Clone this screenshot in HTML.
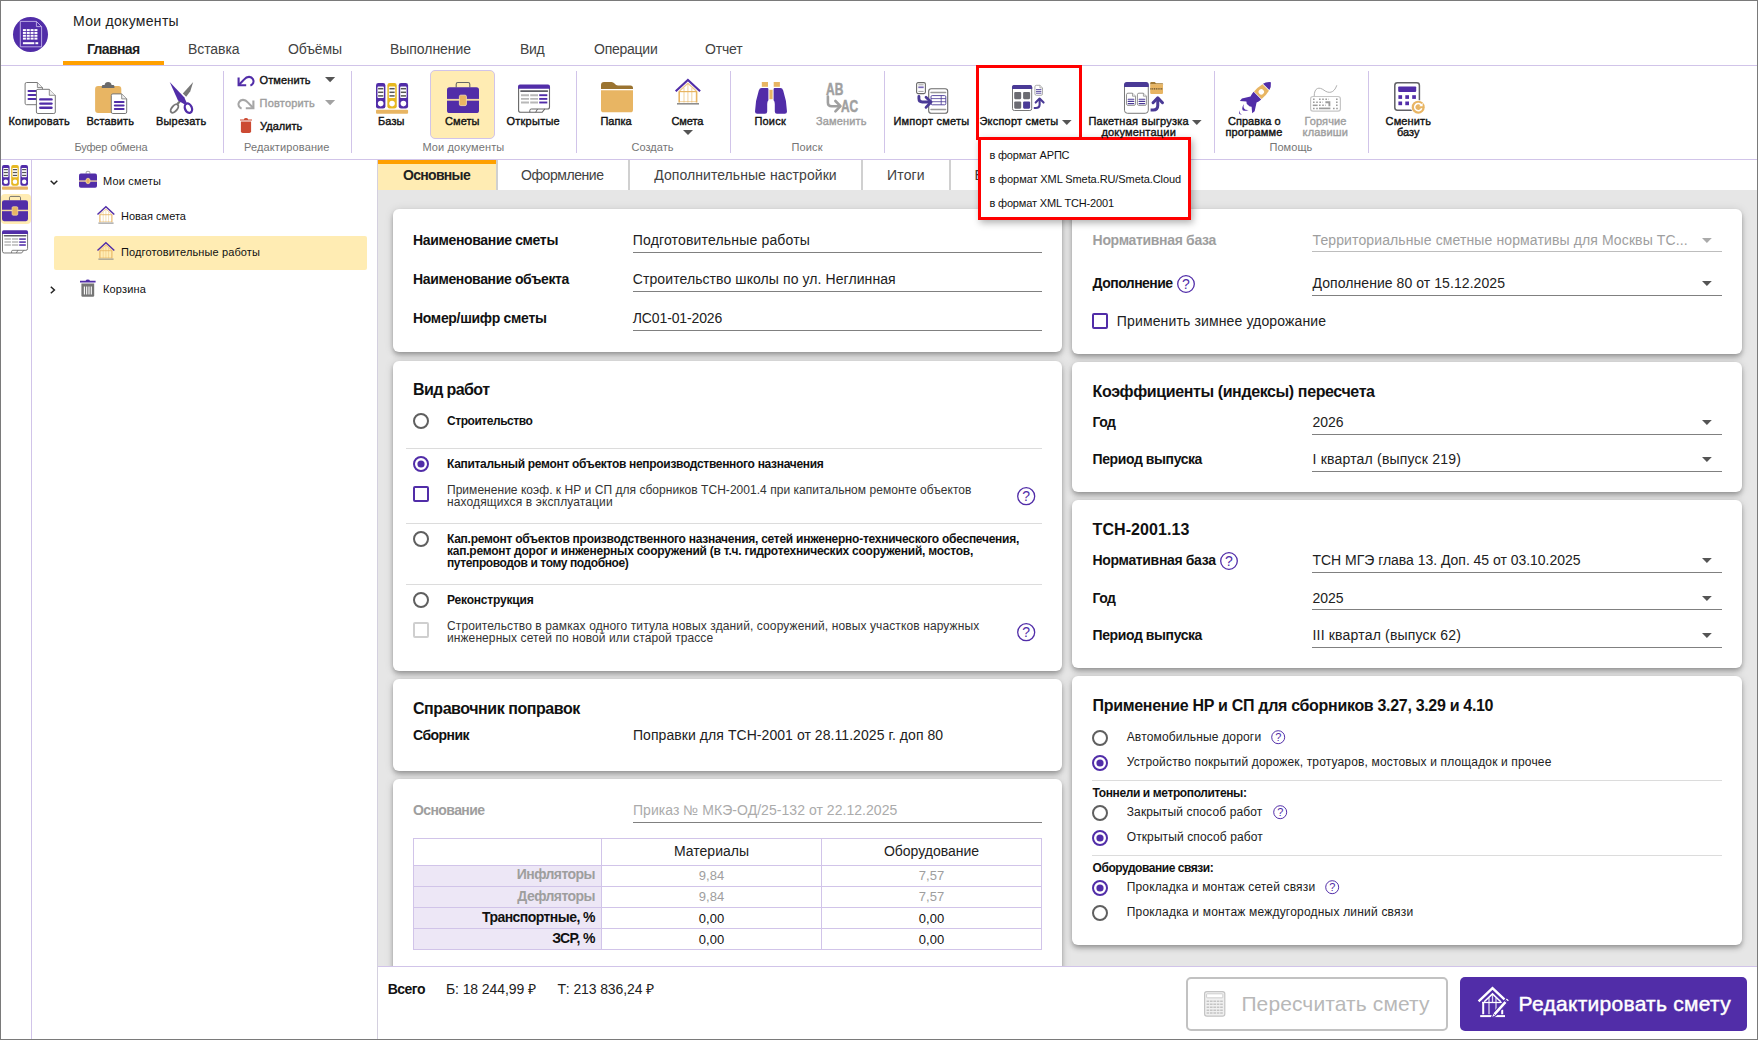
<!DOCTYPE html><html lang="ru"><head><meta charset="utf-8"><title>Мои документы</title><style>
html,body{margin:0;padding:0;}body{width:1758px;height:1040px;overflow:hidden;position:relative;background:#fff;font-family:"Liberation Sans", sans-serif;}
.t{position:absolute;white-space:nowrap;display:block;}svg{display:block;overflow:visible}
.card{position:absolute;background:#fff;border-radius:6px;box-shadow:0 2px 4px -1px rgba(0,0,0,.22),0 4px 5px rgba(0,0,0,.15),0 1px 10px rgba(0,0,0,.13);}
</style></head><body>
<div style="position:absolute;left:0px;top:65px;width:1758px;height:1px;background:#d1c4e9"></div>
<div style="position:absolute;left:0px;top:159px;width:1758px;height:1px;background:#d1c4e9"></div>
<svg style="position:absolute;left:13.4px;top:17px;" width="35" height="35" viewBox="0 0 35 35"><circle cx="17.5" cy="17.5" r="17.5" fill="#512da8"/><path d="M7.3 4.4H23.4L28.6 9.600V29.800H7.300z" fill="none" stroke="#c5b6ea" stroke-width="0.9"/><path d="M23.400 4.400V9.600H28.600" fill="none" stroke="#c5b6ea" stroke-width="0.9"/><g fill="#fff"><rect x="9.90" y="12.10" width="3" height="2"/><rect x="13.74" y="12.10" width="3" height="2"/><rect x="17.58" y="12.10" width="3" height="2"/><rect x="21.42" y="12.10" width="3" height="2"/><rect x="9.90" y="14.94" width="3" height="2"/><rect x="13.74" y="14.94" width="3" height="2"/><rect x="17.58" y="14.94" width="3" height="2"/><rect x="21.42" y="14.94" width="3" height="2"/><rect x="9.90" y="17.78" width="3" height="2"/><rect x="13.74" y="17.78" width="3" height="2"/><rect x="17.58" y="17.78" width="3" height="2"/><rect x="21.42" y="17.78" width="3" height="2"/><rect x="9.90" y="20.62" width="3" height="2"/><rect x="13.74" y="20.62" width="3" height="2"/><rect x="17.58" y="20.62" width="3" height="2"/><rect x="21.42" y="20.62" width="3" height="2"/><rect x="9.9" y="25.2" width="11.4" height="2"/><rect x="22.4" y="25.2" width="2.8" height="2"/></g></svg>
<div style="position:absolute;left:63px;top:61px;width:101px;height:4px;background:#ffa000"></div>
<div style="position:absolute;left:223px;top:71px;width:1px;height:82px;background:#d1c4e9"></div>
<div style="position:absolute;left:351px;top:71px;width:1px;height:82px;background:#d1c4e9"></div>
<div style="position:absolute;left:576px;top:71px;width:1px;height:82px;background:#d1c4e9"></div>
<div style="position:absolute;left:730px;top:71px;width:1px;height:82px;background:#d1c4e9"></div>
<div style="position:absolute;left:884px;top:71px;width:1px;height:82px;background:#d1c4e9"></div>
<div style="position:absolute;left:1214px;top:71px;width:1px;height:82px;background:#d1c4e9"></div>
<div style="position:absolute;left:1368px;top:71px;width:1px;height:82px;background:#d1c4e9"></div>
<div style="position:absolute;left:430px;top:70px;width:65px;height:68.5px;background:#ffecb3;border:1px solid #d1c4e9;border-radius:5px;box-sizing:border-box"></div>
<svg style="position:absolute;left:324.8px;top:76.8px;" width="10.2" height="5.3" viewBox="0 0 10.2 5.3"><path d="M0 0h10.2L5.1 5.3z" fill="#555"/></svg>
<svg style="position:absolute;left:324.8px;top:100px;" width="10.2" height="5.3" viewBox="0 0 10.2 5.3"><path d="M0 0h10.2L5.1 5.3z" fill="#a2a2a2"/></svg>
<svg style="position:absolute;left:682.6px;top:130px;" width="10" height="5" viewBox="0 0 10 5"><path d="M0 0h10L5.0 5z" fill="#555"/></svg>
<svg style="position:absolute;left:1062.4px;top:119.5px;" width="9.6" height="5" viewBox="0 0 9.6 5"><path d="M0 0h9.6L4.8 5z" fill="#555"/></svg>
<svg style="position:absolute;left:1192px;top:119.5px;" width="9.6" height="5" viewBox="0 0 9.6 5"><path d="M0 0h9.6L4.8 5z" fill="#555"/></svg>
<div style="position:absolute;left:31px;top:160px;width:1px;height:880px;background:#d1c4e9"></div>
<div style="position:absolute;left:377px;top:160px;width:1px;height:880px;background:#d4d0df"></div>
<div style="position:absolute;left:1px;top:194px;width:30px;height:30px;background:#ffecb3;border-radius:4px"></div>
<div style="position:absolute;left:54px;top:236px;width:313px;height:34px;background:#ffecb3;border-radius:2px"></div>
<svg style="position:absolute;left:49.6px;top:180.4px;" width="8" height="5" viewBox="0 0 8 5"><path d="M0.7 0.7L4 4l3.3-3.3" fill="none" stroke="#222" stroke-width="1.5"/></svg>
<svg style="position:absolute;left:50.4px;top:286px;" width="5.6" height="8" viewBox="0 0 5.6 8"><path d="M0.8 0.7L4.4 4 0.8 7.3" fill="none" stroke="#222" stroke-width="1.5"/></svg>
<div style="position:absolute;left:378px;top:190px;width:1380px;height:776px;background:#e6e6e6"></div>
<div style="position:absolute;left:378px;top:160px;width:1380px;height:30px;background:#fff"></div>
<div style="position:absolute;left:378px;top:160px;width:118px;height:30px;background:#ffecb3"></div>
<div style="position:absolute;left:378px;top:160px;width:118px;height:4px;background:#ffa000"></div>
<div style="position:absolute;left:496px;top:160px;width:2px;height:30px;background:#d0d0d0"></div>
<div style="position:absolute;left:628px;top:160px;width:2px;height:30px;background:#d0d0d0"></div>
<div style="position:absolute;left:861px;top:160px;width:2px;height:30px;background:#d0d0d0"></div>
<div style="position:absolute;left:949px;top:160px;width:2px;height:30px;background:#d0d0d0"></div>
<div style="position:absolute;left:974.5px;top:166px;width:3.4px;height:20px;overflow:hidden;font-size:14px;line-height:18px;color:#424242">Е</div>
<div class="card" style="left:393px;top:209px;width:669px;height:143px;"></div>
<div class="card" style="left:393px;top:360.5px;width:669px;height:310.5px;"></div>
<div class="card" style="left:393px;top:679px;width:669px;height:92px;"></div>
<div class="card" style="left:393px;top:779px;width:669px;height:200px;"></div>
<div class="card" style="left:1072px;top:209px;width:670px;height:145px;"></div>
<div class="card" style="left:1072px;top:362px;width:670px;height:130px;"></div>
<div class="card" style="left:1072px;top:500px;width:670px;height:168px;"></div>
<div class="card" style="left:1072px;top:676px;width:670px;height:269px;"></div>
<div style="position:absolute;left:633px;top:252px;width:409px;height:1px;background:#808080"></div>
<div style="position:absolute;left:633px;top:291px;width:409px;height:1px;background:#808080"></div>
<div style="position:absolute;left:633px;top:330px;width:409px;height:1px;background:#808080"></div>
<svg style="position:absolute;left:413px;top:413px;" width="16" height="16" viewBox="0 0 16 16"><circle cx="8" cy="8" r="7" fill="#fff" stroke="#5f5f5f" stroke-width="2"/></svg>
<div style="position:absolute;left:406px;top:448px;width:636px;height:1px;background:#dcdcdc"></div>
<svg style="position:absolute;left:413px;top:456px;" width="16" height="16" viewBox="0 0 16 16"><circle cx="8" cy="8" r="7" fill="#fff" stroke="#512da8" stroke-width="2"/><circle cx="8" cy="8" r="3.6" fill="#512da8"/></svg>
<div style="position:absolute;left:413px;top:486px;width:16px;height:16px;border:2px solid #512da8;border-radius:2px;box-sizing:border-box;background:#fff"></div>
<svg style="position:absolute;left:1016.8px;top:486.8px;" width="18.4" height="18.4" viewBox="0 0 18.4 18.4"><circle cx="9.2" cy="9.2" r="8.5" fill="#fff" stroke="#512da8" stroke-width="1.3"/><text x="9.2" y="14.239999999999998" font-size="14" text-anchor="middle" fill="#512da8" font-family="Liberation Sans, sans-serif">?</text></svg>
<div style="position:absolute;left:406px;top:523px;width:636px;height:1px;background:#dcdcdc"></div>
<svg style="position:absolute;left:413px;top:531px;" width="16" height="16" viewBox="0 0 16 16"><circle cx="8" cy="8" r="7" fill="#fff" stroke="#5f5f5f" stroke-width="2"/></svg>
<div style="position:absolute;left:406px;top:584px;width:636px;height:1px;background:#dcdcdc"></div>
<svg style="position:absolute;left:413px;top:592px;" width="16" height="16" viewBox="0 0 16 16"><circle cx="8" cy="8" r="7" fill="#fff" stroke="#5f5f5f" stroke-width="2"/></svg>
<div style="position:absolute;left:413px;top:622px;width:16px;height:16px;border:2px solid #cfcfcf;border-radius:2px;box-sizing:border-box;background:#fff"></div>
<svg style="position:absolute;left:1016.8px;top:622.8px;" width="18.4" height="18.4" viewBox="0 0 18.4 18.4"><circle cx="9.2" cy="9.2" r="8.5" fill="#fff" stroke="#512da8" stroke-width="1.3"/><text x="9.2" y="14.239999999999998" font-size="14" text-anchor="middle" fill="#512da8" font-family="Liberation Sans, sans-serif">?</text></svg>
<div style="position:absolute;left:633px;top:822px;width:409px;height:1px;background:#808080"></div>
<div style="position:absolute;left:413px;top:838px;width:629px;height:112px;border:1px solid #d1c4e9;box-sizing:border-box;background:#fff"></div>
<div style="position:absolute;left:414px;top:865px;width:187px;height:84px;background:#ede7f6"></div>
<div style="position:absolute;left:413px;top:865px;width:629px;height:1px;background:#d1c4e9"></div>
<div style="position:absolute;left:413px;top:886px;width:629px;height:1px;background:#d1c4e9"></div>
<div style="position:absolute;left:413px;top:907px;width:629px;height:1px;background:#d1c4e9"></div>
<div style="position:absolute;left:413px;top:928px;width:629px;height:1px;background:#d1c4e9"></div>
<div style="position:absolute;left:601px;top:838px;width:1px;height:112px;background:#d1c4e9"></div>
<div style="position:absolute;left:821px;top:838px;width:1px;height:112px;background:#d1c4e9"></div>
<div style="position:absolute;left:1312px;top:251px;width:410px;height:1px;background:#bdbdbd"></div>
<svg style="position:absolute;left:1176.6px;top:275.0px;" width="18" height="18" viewBox="0 0 18 18"><circle cx="9.0" cy="9.0" r="8.3" fill="#fff" stroke="#512da8" stroke-width="1.3"/><text x="9.0" y="14.04" font-size="14" text-anchor="middle" fill="#512da8" font-family="Liberation Sans, sans-serif">?</text></svg>
<div style="position:absolute;left:1312px;top:295px;width:410px;height:1px;background:#808080"></div>
<div style="position:absolute;left:1092px;top:313px;width:16px;height:16px;border:2px solid #512da8;border-radius:2px;box-sizing:border-box;background:#fff"></div>
<svg style="position:absolute;left:1702.2px;top:238px;" width="9.8" height="5" viewBox="0 0 10 5"><path d="M0 0h10L5 5z" fill="#aaa"/></svg>
<svg style="position:absolute;left:1702.2px;top:281px;" width="9.8" height="5" viewBox="0 0 10 5"><path d="M0 0h10L5 5z" fill="#555"/></svg>
<div style="position:absolute;left:1312px;top:434px;width:410px;height:1px;background:#808080"></div>
<svg style="position:absolute;left:1702.2px;top:420px;" width="9.8" height="5" viewBox="0 0 10 5"><path d="M0 0h10L5 5z" fill="#555"/></svg>
<div style="position:absolute;left:1312px;top:471px;width:410px;height:1px;background:#808080"></div>
<svg style="position:absolute;left:1702.2px;top:457px;" width="9.8" height="5" viewBox="0 0 10 5"><path d="M0 0h10L5 5z" fill="#555"/></svg>
<svg style="position:absolute;left:1220.2px;top:552.0px;" width="18" height="18" viewBox="0 0 18 18"><circle cx="9.0" cy="9.0" r="8.3" fill="#fff" stroke="#512da8" stroke-width="1.3"/><text x="9.0" y="14.04" font-size="14" text-anchor="middle" fill="#512da8" font-family="Liberation Sans, sans-serif">?</text></svg>
<div style="position:absolute;left:1312px;top:572px;width:410px;height:1px;background:#808080"></div>
<svg style="position:absolute;left:1702.2px;top:558px;" width="9.8" height="5" viewBox="0 0 10 5"><path d="M0 0h10L5 5z" fill="#555"/></svg>
<div style="position:absolute;left:1312px;top:609px;width:410px;height:1px;background:#808080"></div>
<svg style="position:absolute;left:1702.2px;top:596px;" width="9.8" height="5" viewBox="0 0 10 5"><path d="M0 0h10L5 5z" fill="#555"/></svg>
<div style="position:absolute;left:1312px;top:647px;width:410px;height:1px;background:#808080"></div>
<svg style="position:absolute;left:1702.2px;top:633px;" width="9.8" height="5" viewBox="0 0 10 5"><path d="M0 0h10L5 5z" fill="#555"/></svg>
<svg style="position:absolute;left:1092px;top:729.5px;" width="16" height="16" viewBox="0 0 16 16"><circle cx="8" cy="8" r="7" fill="#fff" stroke="#5f5f5f" stroke-width="2"/></svg>
<svg style="position:absolute;left:1270.8px;top:729.8px;" width="14.4" height="14.4" viewBox="0 0 14.4 14.4"><circle cx="7.2" cy="7.2" r="6.5" fill="#fff" stroke="#512da8" stroke-width="1"/><text x="7.2" y="11.16" font-size="11" text-anchor="middle" fill="#512da8" font-family="Liberation Sans, sans-serif">?</text></svg>
<svg style="position:absolute;left:1092px;top:754.5px;" width="16" height="16" viewBox="0 0 16 16"><circle cx="8" cy="8" r="7" fill="#fff" stroke="#512da8" stroke-width="2"/><circle cx="8" cy="8" r="3.6" fill="#512da8"/></svg>
<div style="position:absolute;left:1092px;top:780px;width:630px;height:1px;background:#dcdcdc"></div>
<svg style="position:absolute;left:1092px;top:804.5px;" width="16" height="16" viewBox="0 0 16 16"><circle cx="8" cy="8" r="7" fill="#fff" stroke="#5f5f5f" stroke-width="2"/></svg>
<svg style="position:absolute;left:1272.8px;top:804.8px;" width="14.4" height="14.4" viewBox="0 0 14.4 14.4"><circle cx="7.2" cy="7.2" r="6.5" fill="#fff" stroke="#512da8" stroke-width="1"/><text x="7.2" y="11.16" font-size="11" text-anchor="middle" fill="#512da8" font-family="Liberation Sans, sans-serif">?</text></svg>
<svg style="position:absolute;left:1092px;top:829.5px;" width="16" height="16" viewBox="0 0 16 16"><circle cx="8" cy="8" r="7" fill="#fff" stroke="#512da8" stroke-width="2"/><circle cx="8" cy="8" r="3.6" fill="#512da8"/></svg>
<div style="position:absolute;left:1092px;top:855px;width:630px;height:1px;background:#dcdcdc"></div>
<svg style="position:absolute;left:1092px;top:879.5px;" width="16" height="16" viewBox="0 0 16 16"><circle cx="8" cy="8" r="7" fill="#fff" stroke="#512da8" stroke-width="2"/><circle cx="8" cy="8" r="3.6" fill="#512da8"/></svg>
<svg style="position:absolute;left:1324.8px;top:879.8px;" width="14.4" height="14.4" viewBox="0 0 14.4 14.4"><circle cx="7.2" cy="7.2" r="6.5" fill="#fff" stroke="#512da8" stroke-width="1"/><text x="7.2" y="11.16" font-size="11" text-anchor="middle" fill="#512da8" font-family="Liberation Sans, sans-serif">?</text></svg>
<svg style="position:absolute;left:1092px;top:904.5px;" width="16" height="16" viewBox="0 0 16 16"><circle cx="8" cy="8" r="7" fill="#fff" stroke="#5f5f5f" stroke-width="2"/></svg>
<div style="position:absolute;left:378px;top:966px;width:1380px;height:74px;background:#fff;border-top:1px solid #d1c4e9;box-sizing:border-box"></div>
<div style="position:absolute;left:1186px;top:977px;width:262px;height:54px;border:2px solid #c2c2c2;border-radius:5px;box-sizing:border-box;background:#fff"></div>
<div style="position:absolute;left:1460px;top:977px;width:287px;height:54px;background:#512da8;border-radius:5px"></div>
<svg style="position:absolute;left:24px;top:81.6px;" width="32" height="32" viewBox="0 0 32 32"><path d="M2.6 0.5H13.400000000000002L18.400000000000002 5.5V21.2a1.5 1.5 0 0 1 -1.5 1.5H2.6a1.5 1.5 0 0 1 -1.5 -1.5V2.0a1.5 1.5 0 0 1 1.5 -1.5z" fill="#fff" stroke="#777" stroke-width="1"/><path d="M13.400000000000002 0.5V5.5H18.400000000000002" fill="#eee" stroke="#777" stroke-width="0.8"/><path d="M4.5 9H13" stroke="#512da8" stroke-width="2" stroke-linecap="round"/><path d="M4.5 13H13" stroke="#512da8" stroke-width="2" stroke-linecap="round"/><path d="M4.5 17H13" stroke="#512da8" stroke-width="2" stroke-linecap="round"/><path d="M13.9 7.3H25.299999999999997L31.299999999999997 13.3V30.0a1.5 1.5 0 0 1 -1.5 1.5H13.9a1.5 1.5 0 0 1 -1.5 -1.5V8.8a1.5 1.5 0 0 1 1.5 -1.5z" fill="#fff" stroke="#777" stroke-width="1"/><path d="M25.299999999999997 7.3V13.3H31.299999999999997" fill="#eee" stroke="#777" stroke-width="0.8"/><path d="M16.3 17.4H27.5" stroke="#512da8" stroke-width="2.4" stroke-linecap="round"/><path d="M16.3 21.6H27.5" stroke="#512da8" stroke-width="2.4" stroke-linecap="round"/><path d="M16.3 25.8H27.5" stroke="#512da8" stroke-width="2.4" stroke-linecap="round"/></svg>
<svg style="position:absolute;left:94px;top:81.6px;" width="34" height="32" viewBox="0 0 34 32"><rect x="1.1" y="4" width="26.2" height="27" rx="3" fill="#e8b563"/><path d="M7.800 6V4.400q0-1.300 1.300-1.300h1.500q0.400-3.100 3.500-3.100t3.500 3.100h1.500q1.300 0 1.300 1.300V6z" fill="#6a6a6a"/><path d="M18.8 11.9H27.700000000000003L32.7 16.9V30.0a1.5 1.5 0 0 1 -1.5 1.5H18.8a1.5 1.5 0 0 1 -1.5 -1.5V13.4a1.5 1.5 0 0 1 1.5 -1.5z" fill="#fff" stroke="#777" stroke-width="1"/><path d="M27.700000000000003 11.9V16.9H32.7" fill="#eee" stroke="#777" stroke-width="0.8"/><path d="M20.8 20H29.6" stroke="#512da8" stroke-width="2" stroke-linecap="round"/><path d="M20.8 23.5H29.6" stroke="#512da8" stroke-width="2" stroke-linecap="round"/><path d="M20.8 27H29.6" stroke="#512da8" stroke-width="2" stroke-linecap="round"/></svg>
<svg style="position:absolute;left:168px;top:81.6px;" width="26" height="32" viewBox="0 0 26 32"><path d="M25.2 0L14.800 11.400 18.200 14.800 22.300 9.200z" fill="#777"/><path d="M15 16L9.400 22" stroke="#777" stroke-width="2.200"/><ellipse cx="6.500" cy="26.500" rx="2.700" ry="5" transform="rotate(40 6.500 26.500)" fill="#fff" stroke="#777" stroke-width="1.900"/><path d="M1.700 0L10 18.600 16.800 22.400 18.600 20.600 16.200 15.200z" fill="#512da8"/><ellipse cx="20.400" cy="26.200" rx="3.400" ry="4.900" transform="rotate(-22 20.400 26.200)" fill="#fff" stroke="#512da8" stroke-width="2.300"/></svg>
<svg style="position:absolute;left:237px;top:75px;" width="18" height="12" viewBox="0 0 18 12"><g fill="none" stroke="#512da8" stroke-width="2.1"><path d="M1.6 2.6V10.2H9.2"/><path d="M2 9.8L7.2 4.4C10 1.2 14.2 1 16 4.2 17.6 7 15.8 9.6 13.4 10.6"/></g></svg>
<svg style="position:absolute;left:237px;top:98.2px;" width="18" height="12" viewBox="0 0 18 12"><g transform="translate(18 0) scale(-1 1)" fill="none" stroke="#a6a6a6" stroke-width="2.1"><path d="M1.6 2.6V10.2H9.2"/><path d="M2 9.8L7.2 4.4C10 1.2 14.2 1 16 4.2 17.6 7 15.8 9.6 13.4 10.6"/></g></svg>
<svg style="position:absolute;left:240px;top:118px;" width="12" height="15.2" viewBox="0 0 12 15.2"><path d="M0 2.6V1.4H3.8Q4.2 0 6 0t2.2 1.4H12V2.6z" fill="#cc4a33"/><path d="M0.9 3.6H11.1V13.3a1.8 1.8 0 0 1 -1.8 1.8H2.7a1.8 1.8 0 0 1 -1.8 -1.8z" fill="#cc4a33"/></svg>
<svg style="position:absolute;left:376px;top:83.1px;" width="32.1" height="30.7" viewBox="0 0 32.1 30.7"><rect x="0.0" y="0" width="9.4" height="25.6" rx="2.4" fill="#512da8"/><rect x="1.5" y="3.6" width="6.4" height="11.4" rx="0.8" fill="#fff"/><path d="M2.1 5.7H7.3" stroke="#555" stroke-width="1.5"/><path d="M2.1 9.3H7.3" stroke="#555" stroke-width="1.5"/><path d="M2.1 12.9H7.3" stroke="#555" stroke-width="1.5"/><circle cx="4.7" cy="20.6" r="2.8" fill="#fff"/><rect x="11.35" y="0" width="9.4" height="25.6" rx="2.4" fill="#e6b820"/><rect x="12.85" y="3.6" width="6.4" height="11.4" rx="0.8" fill="#fff"/><path d="M13.45 5.7H18.65" stroke="#555" stroke-width="1.5"/><path d="M13.45 9.3H18.65" stroke="#555" stroke-width="1.5"/><path d="M13.45 12.9H18.65" stroke="#555" stroke-width="1.5"/><circle cx="16.05" cy="20.6" r="2.8" fill="#fff"/><rect x="22.7" y="0" width="9.4" height="25.6" rx="2.4" fill="#512da8"/><rect x="24.2" y="3.6" width="6.4" height="11.4" rx="0.8" fill="#fff"/><path d="M24.8 5.7H30.0" stroke="#555" stroke-width="1.5"/><path d="M24.8 9.3H30.0" stroke="#555" stroke-width="1.5"/><path d="M24.8 12.9H30.0" stroke="#555" stroke-width="1.5"/><circle cx="27.4" cy="20.6" r="2.8" fill="#fff"/><rect x="0" y="26.7" width="32.1" height="4" rx="1" fill="#e8b563"/></svg>
<svg style="position:absolute;left:447px;top:82px;" width="32.0" height="31.0" viewBox="0 0 32 31"><path d="M9.2 5.4V2.2q0-1.7 1.7-1.7h10.2q1.7 0 1.7 1.7V5.4" fill="none" stroke="#666" stroke-width="1.1"/><rect x="0" y="5.2" width="32" height="25.8" rx="2.6" fill="#512da8"/><rect x="0" y="16.9" width="32" height="1.8" fill="#f4d9a2"/><rect x="12.4" y="13.2" width="7" height="10.4" rx="1.3" fill="#e8b563" stroke="#f4d9a2" stroke-width="0.9"/></svg>
<svg style="position:absolute;left:518px;top:84px;" width="32.0" height="29.0" viewBox="0 0 32 29"><path d="M0.6 3V26.200Q0.600 28.300 2.700 28.300H24.200L26.800 25H29.400Q31.500 25 31.500 22.900V3z" fill="#fff" stroke="#666" stroke-width="1.100"/><path d="M11.800 28.300V26.500Q11.800 25 13.300 25H26.800M19.500 25L17.700 28.300" fill="none" stroke="#666" stroke-width="1"/><path d="M0 4.800V2.400q0-2 2-2H30q2 0 2 2V4.800z" fill="#512da8"/><path d="M3 7.100H29.300" stroke="#5f5f66" stroke-width="1.700" stroke-linecap="round"/><path d="M3 11.2H11M12.200 11.2H20" stroke="#b8b8b8" stroke-width="1.900"/><path d="M21.200 11.2H29.300" stroke="#512da8" stroke-width="1.900"/><path d="M3 14.9H11M12.200 14.9H20" stroke="#b8b8b8" stroke-width="1.900"/><path d="M21.200 14.9H29.300" stroke="#512da8" stroke-width="1.900"/><path d="M3 18.5H11M12.200 18.5H20" stroke="#b8b8b8" stroke-width="1.900"/><path d="M21.200 18.5H29.300" stroke="#512da8" stroke-width="1.900"/></svg>
<svg style="position:absolute;left:601px;top:82px;" width="32" height="30.3" viewBox="0 0 32 30.3"><path d="M0 6.9V3q0-3 3-3H10.5q1.8 0 3 1.6 1.4 2 3.5 2H29.5q2.5 0 2.5 2.5V6.9z" fill="#9a7330"/><path d="M0 8.3H32V27.7q0 2.6-2.6 2.6H2.6Q0 30.300 0 27.700z" fill="#e8b563"/></svg>
<svg style="position:absolute;left:675px;top:78.6px;" width="26.0" height="26.0" viewBox="0 0 26 26"><g fill="none" stroke="#e8b563"><path d="M4.2 12.4V23.4M21.6 12.4V23.4" stroke-width="1.6"/><path d="M3.8 12.6H22" stroke-width="1.2"/><path d="M4.5 12L12.9 4.4 21.3 12" stroke-width="1.2" opacity=".75"/><path d="M9 9V23.4M12.9 4.6V23.4M16.8 9V23.4" stroke-width="1.1" opacity=".55"/><path d="M4.2 22.6H21.6" stroke-width="1" opacity=".6"/></g><path d="M0.7 12.3L12.9 1 25.1 12.3" fill="none" stroke="#512da8" stroke-width="2.1"/><path d="M2 24.8H24" stroke="#888" stroke-width="1.5"/></svg>
<svg style="position:absolute;left:755px;top:82px;" width="32" height="31.8" viewBox="0 0 32 31.8"><rect x="6.8" y="0" width="6.2" height="4.8" fill="#e8b563"/><rect x="18.7" y="0" width="6.2" height="4.8" fill="#e8b563"/><rect x="14.4" y="7.8" width="3.2" height="9.4" fill="#e8b563"/><path d="M6.6 6H12.4Q13.4 6 13.4 7.2V18.2Q12.2 19.4 12.2 22V29.6Q12.2 31.8 10 31.8H2.2Q0 31.8 0 29.6 0.200 19 3.800 8.400 4.600 6 6.600 6z" fill="#512da8"/><path d="M25.4 6H19.600Q18.600 6 18.600 7.2V18.2Q19.800 19.400 19.800 22V29.6Q19.800 31.800 22 31.800H29.800Q32 31.800 32 29.600 31.800 19 28.200 8.400 27.400 6 25.400 6z" fill="#512da8"/></svg>
<svg style="position:absolute;left:826px;top:82.9px;" width="33" height="30" viewBox="0 0 33 30"><text x="0.1" y="12.1" font-size="16.9" font-weight="700" fill="#a0a0a0" stroke="#a0a0a0" stroke-width="0.5" textLength="17.3" lengthAdjust="spacingAndGlyphs" font-family="Liberation Sans, sans-serif">AB</text><text x="15" y="29" font-size="16.9" font-weight="700" fill="#a0a0a0" stroke="#a0a0a0" stroke-width="0.5" textLength="17.2" lengthAdjust="spacingAndGlyphs" font-family="Liberation Sans, sans-serif">AC</text><path d="M1.9 13.5V19.400Q1.900 23.200 5.700 23.200H13.400" fill="none" stroke="#a0a0a0" stroke-width="2.600" stroke-linecap="round"/><path d="M9.400 18L14.500 23.200 9.400 28.400" fill="none" stroke="#a0a0a0" stroke-width="2.600" stroke-linecap="round" stroke-linejoin="round"/></svg>
<svg style="position:absolute;left:915.5px;top:81.8px;" width="32.5" height="32" viewBox="0 0 32.5 32"><rect x="0.600" y="0.600" width="8.800" height="11" rx="1.500" fill="#fff" stroke="#6a6a6a" stroke-width="1.100"/><path d="M2.400 2.800H7.600M2.400 9.400H7.600" stroke="#999" stroke-width="0.900"/><path d="M2.300 5.300H7.700" stroke="#7a6bb8" stroke-width="1.700"/><rect x="12.700" y="6.700" width="19" height="24.600" rx="2.600" fill="#fff" stroke="#6a6a6a" stroke-width="1.100"/><path d="M15 10.600H29.600M15 27.400H29.600" stroke="#999" stroke-width="1.500" stroke-linecap="round"/><rect x="15" y="13.600" width="14.800" height="9.200" rx="1.200" fill="#fff" stroke="#4a3a96" stroke-width="0.900"/><path d="M15 16.600H29.800M15 19.700H29.800M25.200 13.600V22.800" stroke="#4a3a96" stroke-width="0.800"/><path d="M2.900 14.400V16.600Q2.900 20 6.300 20H14" fill="none" stroke="#4a3a96" stroke-width="2.900" stroke-linecap="round"/><path d="M10 15.200L15.100 20 10 25.400" fill="none" stroke="#4a3a96" stroke-width="2.700" stroke-linejoin="round" stroke-linecap="round"/></svg>
<svg style="position:absolute;left:1011.8px;top:84.6px;" width="32.5" height="26" viewBox="0 0 32.5 26"><rect x="0.5" y="0.5" width="19.2" height="25" rx="1.8" fill="#fff" stroke="#777"/><path d="M0 4V2q0-2 2-2H18.200q2 0 2 2V4z" fill="#4a3a96"/><rect x="2.2" y="7" width="7" height="7.2" rx="1.1" fill="#6b6b72"/><rect x="11.1" y="7" width="7" height="7.2" rx="1.1" fill="#6b6b72"/><rect x="2.2" y="16.5" width="7" height="7.2" rx="1.1" fill="#6b6b72"/><rect x="11.1" y="16.5" width="7" height="7.2" rx="1.1" fill="#4a3a96"/><path d="M24.4 0.3H27.9L30.5 2.9V8.8a1.5 1.5 0 0 1 -1.5 1.5H24.4a1.5 1.5 0 0 1 -1.5 -1.5V1.8a1.5 1.5 0 0 1 1.5 -1.5z" fill="#fff" stroke="#888" stroke-width="0.7"/><path d="M27.9 0.3V2.9H30.5" fill="#eee" stroke="#888" stroke-width="0.5599999999999999"/><path d="M24.4 4.6H29" stroke="#4a3a96" stroke-width="0.9" stroke-linecap="round"/><path d="M24.4 6.4H29" stroke="#4a3a96" stroke-width="0.9" stroke-linecap="round"/><path d="M24.4 8.2H29" stroke="#4a3a96" stroke-width="0.9" stroke-linecap="round"/><path d="M21.8 22.95H23.880000000000003Q27.624000000000002 22.95 27.624000000000002 19.439999999999998V13.86" fill="none" stroke="#4a3a96" stroke-width="2.1"/><path d="M23.678 17.596000000000004L27.624000000000002 13.545L31.570000000000004 17.596000000000004" fill="none" stroke="#4a3a96" stroke-width="2.1" stroke-linecap="round" stroke-linejoin="round"/></svg>
<svg style="position:absolute;left:1123.8px;top:81.8px;" width="39.4" height="32" viewBox="0 0 39.4 32"><rect x="0.5" y="0.5" width="23.8" height="30.8" rx="3" fill="#fff" stroke="#777"/><path d="M0 5V3q0-3 3-3H21.8q3 0 3 3V5z" fill="#4a3a96"/><path d="M4.0 11.2H8.5L11.5 14.2V21.9a1.5 1.5 0 0 1 -1.5 1.5H4.0a1.5 1.5 0 0 1 -1.5 -1.5V12.7a1.5 1.5 0 0 1 1.5 -1.5z" fill="#fff" stroke="#777" stroke-width="0.8"/><path d="M8.5 11.2V14.2H11.5" fill="#eee" stroke="#777" stroke-width="0.6400000000000001"/><path d="M4.2 17.2H9.8" stroke="#4a3a96" stroke-width="1.1" stroke-linecap="round"/><path d="M4.2 19.4H9.8" stroke="#4a3a96" stroke-width="1.1" stroke-linecap="round"/><path d="M4.2 21.6H9.8" stroke="#4a3a96" stroke-width="1.1" stroke-linecap="round"/><path d="M14.9 11.2H19.4L22.4 14.2V21.9a1.5 1.5 0 0 1 -1.5 1.5H14.9a1.5 1.5 0 0 1 -1.5 -1.5V12.7a1.5 1.5 0 0 1 1.5 -1.5z" fill="#fff" stroke="#777" stroke-width="0.8"/><path d="M19.4 11.2V14.2H22.4" fill="#eee" stroke="#777" stroke-width="0.6400000000000001"/><path d="M15.1 17.2H20.7" stroke="#4a3a96" stroke-width="1.1" stroke-linecap="round"/><path d="M15.1 19.4H20.7" stroke="#4a3a96" stroke-width="1.1" stroke-linecap="round"/><path d="M15.1 21.6H20.7" stroke="#4a3a96" stroke-width="1.1" stroke-linecap="round"/><path d="M26.2 2.6V1.2q0-1.200 1.200-1.200h3.400l1.200 1.300h6.400q0.800 0 0.800 0.900V2.600z" fill="#a37b36"/><rect x="26.200" y="2.300" width="12.800" height="9.600" rx="0.800" fill="#e8b563"/><path d="M26.4 6.8H39" stroke="#5d4a2a" stroke-width="1.3" stroke-dasharray="1.1 0.7"/><path d="M26.6 28.0H29.160000000000004Q33.768 28.0 33.768 23.5V16.3" fill="none" stroke="#4a3a96" stroke-width="3"/><path d="M29.036 20.732000000000003L33.768 15.85L38.50000000000001 20.732000000000003" fill="none" stroke="#4a3a96" stroke-width="3" stroke-linecap="round" stroke-linejoin="round"/></svg>
<svg style="position:absolute;left:1238px;top:81.8px;" width="33" height="32" viewBox="0 0 33 32"><g transform="translate(23.3 9.8) rotate(45)"><path d="M0 -13.6Q3.8 -10.4 4.5 -6.9H-4.5Q-3.8 -10.4 0 -13.6z" fill="#512da8"/><path d="M-4.6 -6.2H4.6Q5.9 -0.5 5.4 4.9H-5.4Q-5.9 -0.5 -4.6 -6.2z" fill="#e8b563"/><circle cx="0" cy="0" r="2.7" fill="#fff"/><path d="M-5.4 5.5H5.4Q5 9 4.3 11L9 18.4 8.7 21.600 3.700 17.400Q2 19.300 0 18.700 -2 19.300 -3.700 17.400L-8.700 21.600 -9 18.400 -4.300 11Q-5 9 -5.400 5.500z" fill="#512da8"/><path d="M-3.900 21Q-0.500 31 3.900 21.800Q0 26.600 -3.900 21z" fill="#512da8"/><path d="M-2.400 28.600Q0 33 2.400 29.600Q0 31.200 -2.400 28.600z" fill="#512da8"/></g></svg>
<svg style="position:absolute;left:1310px;top:84.6px;" width="31" height="27" viewBox="0 0 31 27"><rect x="0.600" y="11.500" width="29.800" height="14.600" rx="2.400" fill="#fff" stroke="#c6c6c6" stroke-width="1.200"/><path d="M4.200 11.400C4.200 2 9.500 1.800 14 5.200S24 8.600 26.800 0.300" fill="none" stroke="#b0b0b0" stroke-width="1"/><path d="M3 14.200H4.600M9 14.200H19M26 14.200H27.600" stroke="#9c9c9c" stroke-width="1.500" stroke-dasharray="1.600 1.600"/><path d="M3 17.300H13M26 17.300H27.600" stroke="#9c9c9c" stroke-width="1.500" stroke-dasharray="1.600 1.600"/><path d="M2.800 20.300H7.600" stroke="#9c9c9c" stroke-width="1.500"/><path d="M9 20.300H16M26 20.300H27.600" stroke="#9c9c9c" stroke-width="1.500" stroke-dasharray="1.600 1.600"/><path d="M3 23.400H7.800M23 23.400H27.800" stroke="#9c9c9c" stroke-width="1.500" stroke-dasharray="1.600 1.600"/><path d="M9 23.400H20.400" stroke="#9c9c9c" stroke-width="1.700"/><path d="M15.400 17.300H19.400V21.200" fill="none" stroke="#9c9c9c" stroke-width="1.900"/></svg>
<svg style="position:absolute;left:1394.1px;top:82.2px;" width="31" height="32.5" viewBox="0 0 31 32.5"><rect x="0.800" y="0.800" width="24.600" height="27.400" rx="2.600" fill="#fff" stroke="#606066" stroke-width="1.500"/><rect x="4.200" y="4.500" width="18" height="5.400" rx="0.800" fill="#512da8"/><rect x="4.4" y="13.2" width="3.700" height="3.700" fill="#512da8"/><rect x="11.3" y="13.2" width="3.700" height="3.700" fill="#512da8"/><rect x="18.2" y="13.2" width="3.700" height="3.700" fill="#512da8"/><rect x="4.4" y="19.5" width="3.700" height="3.700" fill="#512da8"/><rect x="11.3" y="19.5" width="3.700" height="3.700" fill="#512da8"/><circle cx="24.200" cy="25.200" r="7.300" fill="#fff"/><circle cx="24.200" cy="25.200" r="6.500" fill="#e8b563"/><path d="M27.300 23.200A3.600 3.600 0 1 0 27.700 26.200" fill="none" stroke="#fff" stroke-width="1.500"/><path d="M28.600 20.800V24.200H25.200z" fill="#fff"/></svg>
<svg style="position:absolute;left:2px;top:165.1px;" width="26.0" height="24.87" viewBox="0 0 32.1 30.7"><rect x="0.0" y="0" width="9.4" height="25.6" rx="2.4" fill="#512da8"/><rect x="1.5" y="3.6" width="6.4" height="11.4" rx="0.8" fill="#fff"/><path d="M2.1 5.7H7.3" stroke="#555" stroke-width="1.5"/><path d="M2.1 9.3H7.3" stroke="#555" stroke-width="1.5"/><path d="M2.1 12.9H7.3" stroke="#555" stroke-width="1.5"/><circle cx="4.7" cy="20.6" r="2.8" fill="#fff"/><rect x="11.35" y="0" width="9.4" height="25.6" rx="2.4" fill="#e6b820"/><rect x="12.85" y="3.6" width="6.4" height="11.4" rx="0.8" fill="#fff"/><path d="M13.45 5.7H18.65" stroke="#555" stroke-width="1.5"/><path d="M13.45 9.3H18.65" stroke="#555" stroke-width="1.5"/><path d="M13.45 12.9H18.65" stroke="#555" stroke-width="1.5"/><circle cx="16.05" cy="20.6" r="2.8" fill="#fff"/><rect x="22.7" y="0" width="9.4" height="25.6" rx="2.4" fill="#512da8"/><rect x="24.2" y="3.6" width="6.4" height="11.4" rx="0.8" fill="#fff"/><path d="M24.8 5.7H30.0" stroke="#555" stroke-width="1.5"/><path d="M24.8 9.3H30.0" stroke="#555" stroke-width="1.5"/><path d="M24.8 12.9H30.0" stroke="#555" stroke-width="1.5"/><circle cx="27.4" cy="20.6" r="2.8" fill="#fff"/><rect x="0" y="26.7" width="32.1" height="4" rx="1" fill="#e8b563"/></svg>
<svg style="position:absolute;left:2px;top:195.6px;" width="26.0" height="25.19" viewBox="0 0 32 31"><path d="M9.2 5.4V2.2q0-1.7 1.7-1.7h10.2q1.7 0 1.7 1.7V5.4" fill="none" stroke="#666" stroke-width="1.1"/><rect x="0" y="5.2" width="32" height="25.8" rx="2.6" fill="#512da8"/><rect x="0" y="16.9" width="32" height="1.8" fill="#f4d9a2"/><rect x="12.4" y="13.2" width="7" height="10.4" rx="1.3" fill="#e8b563" stroke="#f4d9a2" stroke-width="0.9"/></svg>
<svg style="position:absolute;left:2px;top:230px;" width="26.0" height="23.56" viewBox="0 0 32 29"><path d="M0.6 3V26.200Q0.600 28.300 2.700 28.300H24.200L26.800 25H29.400Q31.500 25 31.500 22.900V3z" fill="#fff" stroke="#666" stroke-width="1.100"/><path d="M11.800 28.300V26.500Q11.800 25 13.300 25H26.800M19.500 25L17.700 28.300" fill="none" stroke="#666" stroke-width="1"/><path d="M0 4.800V2.400q0-2 2-2H30q2 0 2 2V4.800z" fill="#512da8"/><path d="M3 7.100H29.300" stroke="#5f5f66" stroke-width="1.700" stroke-linecap="round"/><path d="M3 11.2H11M12.200 11.2H20" stroke="#b8b8b8" stroke-width="1.900"/><path d="M21.200 11.2H29.300" stroke="#512da8" stroke-width="1.900"/><path d="M3 14.9H11M12.200 14.9H20" stroke="#b8b8b8" stroke-width="1.900"/><path d="M21.200 14.9H29.300" stroke="#512da8" stroke-width="1.900"/><path d="M3 18.5H11M12.200 18.5H20" stroke="#b8b8b8" stroke-width="1.900"/><path d="M21.200 18.5H29.300" stroke="#512da8" stroke-width="1.900"/></svg>
<svg style="position:absolute;left:79px;top:171.2px;" width="18" height="17" viewBox="0 0 18 17"><path d="M7.2 2.7V1.3q0-0.9 0.9-0.9h1.8q0.9 0 0.9 0.9V2.7" fill="none" stroke="#888" stroke-width="0.8"/><rect x="0" y="2.6" width="18" height="14.2" rx="1.8" fill="#512da8"/><rect x="0" y="9.4" width="18" height="1.3" fill="#f4d9a2"/><ellipse cx="9" cy="10" rx="2.1" ry="2.8" fill="#e8b563" stroke="#f4d9a2" stroke-width="0.8"/></svg>
<svg style="position:absolute;left:97px;top:206px;" width="17.94" height="17.94" viewBox="0 0 26 26"><g fill="none" stroke="#e8b563"><path d="M4.2 12.4V23.4M21.6 12.4V23.4" stroke-width="1.6"/><path d="M3.8 12.6H22" stroke-width="1.2"/><path d="M4.5 12L12.9 4.4 21.3 12" stroke-width="1.2" opacity=".75"/><path d="M9 9V23.4M12.9 4.6V23.4M16.8 9V23.4" stroke-width="1.1" opacity=".55"/><path d="M4.2 22.6H21.6" stroke-width="1" opacity=".6"/></g><path d="M0.7 12.3L12.9 1 25.1 12.3" fill="none" stroke="#512da8" stroke-width="2.1"/><path d="M2 24.8H24" stroke="#888" stroke-width="1.5"/></svg>
<svg style="position:absolute;left:97px;top:242px;" width="17.94" height="17.94" viewBox="0 0 26 26"><g fill="none" stroke="#e8b563"><path d="M4.2 12.4V23.4M21.6 12.4V23.4" stroke-width="1.6"/><path d="M3.8 12.6H22" stroke-width="1.2"/><path d="M4.5 12L12.9 4.4 21.3 12" stroke-width="1.2" opacity=".75"/><path d="M9 9V23.4M12.9 4.6V23.4M16.8 9V23.4" stroke-width="1.1" opacity=".55"/><path d="M4.2 22.6H21.6" stroke-width="1" opacity=".6"/></g><path d="M0.7 12.3L12.9 1 25.1 12.3" fill="none" stroke="#512da8" stroke-width="2.1"/><path d="M2 24.8H24" stroke="#888" stroke-width="1.5"/></svg>
<svg style="position:absolute;left:80px;top:278.8px;" width="15.6" height="18" viewBox="0 0 15.6 18"><path d="M0 3.600V1.800H5.600Q6 0.500 7.800 0.500T10 1.800H15.600V3.600z" fill="#512da8"/><path d="M1.400 4.600H14.200V16.600q0 1.200-1.200 1.200H2.600q-1.200 0-1.200-1.200z" fill="#757575"/><path d="M4.400 7.400V15.400M6.700 7.400V15.400M9 7.400V15.400M11.300 7.400V15.400" stroke="#fff" stroke-width="1.100"/></svg>
<svg style="position:absolute;left:1203.8px;top:991px;" width="21.4" height="25.8" viewBox="0 0 21.4 25.8"><rect x="0.600" y="0.600" width="20.200" height="24.600" rx="2.200" fill="#f0f0f0" stroke="#c4c4c4" stroke-width="1.200"/><rect x="2.600" y="2.800" width="16.200" height="4" rx="0.600" fill="#fff" stroke="#c4c4c4" stroke-width="0.800"/><path d="M2.600 10.2H18.800" stroke="#c4c4c4" stroke-width="1.600" stroke-dasharray="2.600 0.800"/><path d="M2.600 13.2H18.800" stroke="#c4c4c4" stroke-width="1.600" stroke-dasharray="2.600 0.800"/><path d="M2.600 16.2H18.800" stroke="#c4c4c4" stroke-width="1.600" stroke-dasharray="2.600 0.800"/><path d="M2.600 19.2H18.800" stroke="#c4c4c4" stroke-width="1.600" stroke-dasharray="2.600 0.800"/><path d="M2.600 22H18.800" stroke="#c4c4c4" stroke-width="1.600" stroke-dasharray="2.600 0.800"/></svg>
<svg style="position:absolute;left:1478px;top:987px;" width="32" height="32" viewBox="0 0 32 32"><g fill="none" stroke="#fff"><path d="M0.6 14.4L14.5 1.200 28.600 14.400" stroke-width="2.500"/><path d="M6.200 14.800L14.500 6.900 22.800 14.800" stroke-width="1.500"/><path d="M4 15.500H24" stroke-width="1.300"/><path d="M5.200 15V27.200M24.200 22.800V27.200" stroke-width="2"/><path d="M11 10.500V27.200M18 10.500V27.200M14.500 8V15.500" stroke-width="1.300" opacity=".8"/><path d="M2.200 29.100H27" stroke-width="2"/></g><g transform="translate(13.300 30.900) rotate(-48.200)" stroke="#512da8" stroke-width="1.100"><path d="M0 0L4.600 -1.900H21.800V1.900H4.600z" fill="#fff"/><path d="M22.900 -1.900H25.300V1.900H22.900z" fill="#fff"/><path d="M4.600 -1.900V1.900" stroke-width="0.700"/></g></svg>
<div style="position:absolute;left:976px;top:65px;width:105.5px;height:74.6px;border:3px solid #ff0000;box-sizing:border-box"></div>
<div style="position:absolute;left:977.6px;top:136.6px;width:213.9px;height:83.9px;border:3px solid #ff0000;box-sizing:border-box;background:#fff;box-shadow:2px 3px 7px rgba(0,0,0,.3)"></div>
<div style="position:absolute;left:0px;top:0px;width:1758px;height:1040px;border:1px solid #7a7a7a;box-sizing:border-box;pointer-events:none"></div>
<span class="t" style="left:73px;top:12.15px;font-size:14px;line-height:18px;color:#212121;letter-spacing:0.306px;">Мои документы</span>
<span class="t" style="left:87px;top:40.15px;font-size:14px;line-height:18px;color:#212121;font-weight:700;letter-spacing:-0.634px;">Главная</span>
<span class="t" style="left:188px;top:40.15px;font-size:14px;line-height:18px;color:#424242;letter-spacing:-0.078px;">Вставка</span>
<span class="t" style="left:288px;top:40.15px;font-size:14px;line-height:18px;color:#424242;letter-spacing:-0.112px;">Объёмы</span>
<span class="t" style="left:390px;top:40.15px;font-size:14px;line-height:18px;color:#424242;letter-spacing:-0.048px;">Выполнение</span>
<span class="t" style="left:520px;top:40.15px;font-size:14px;line-height:18px;color:#424242;letter-spacing:-0.276px;">Вид</span>
<span class="t" style="left:594px;top:40.15px;font-size:14px;line-height:18px;color:#424242;letter-spacing:-0.250px;">Операции</span>
<span class="t" style="left:705px;top:40.15px;font-size:14px;line-height:18px;color:#424242;letter-spacing:-0.169px;">Отчет</span>
<span class="t" style="left:8.4px;top:114.19px;font-size:11px;line-height:14px;color:#111;letter-spacing:0.237px;-webkit-text-stroke:0.38px #111;">Копировать</span>
<span class="t" style="left:86.4px;top:114.19px;font-size:11px;line-height:14px;color:#111;letter-spacing:0.120px;-webkit-text-stroke:0.38px #111;">Вставить</span>
<span class="t" style="left:156.0px;top:114.19px;font-size:11px;line-height:14px;color:#111;letter-spacing:0.183px;-webkit-text-stroke:0.38px #111;">Вырезать</span>
<span class="t" style="left:74.4px;top:139.59px;font-size:11px;line-height:14px;color:#757575;letter-spacing:-0.146px;">Буфер обмена</span>
<span class="t" style="left:259.6px;top:72.79px;font-size:11px;line-height:14px;color:#111;letter-spacing:0.092px;-webkit-text-stroke:0.38px #111;">Отменить</span>
<span class="t" style="left:259.6px;top:95.79px;font-size:11px;line-height:14px;color:#9e9e9e;letter-spacing:0.189px;-webkit-text-stroke:0.38px #9e9e9e;">Повторить</span>
<span class="t" style="left:260px;top:118.79px;font-size:11px;line-height:14px;color:#111;letter-spacing:0.057px;-webkit-text-stroke:0.38px #111;">Удалить</span>
<span class="t" style="left:244px;top:139.59px;font-size:11px;line-height:14px;color:#757575;letter-spacing:0.129px;">Редактирование</span>
<span class="t" style="left:378.0px;top:114.19px;font-size:11px;line-height:14px;color:#111;letter-spacing:0.107px;-webkit-text-stroke:0.38px #111;">Базы</span>
<span class="t" style="left:445.0px;top:114.19px;font-size:11px;line-height:14px;color:#111;letter-spacing:0.079px;-webkit-text-stroke:0.38px #111;">Сметы</span>
<span class="t" style="left:506.4px;top:114.19px;font-size:11px;line-height:14px;color:#111;letter-spacing:0.263px;-webkit-text-stroke:0.38px #111;">Открытые</span>
<span class="t" style="left:422.4px;top:139.59px;font-size:11px;line-height:14px;color:#757575;letter-spacing:0.142px;">Мои документы</span>
<span class="t" style="left:600.4px;top:114.19px;font-size:11px;line-height:14px;color:#111;letter-spacing:0.009px;-webkit-text-stroke:0.38px #111;">Папка</span>
<span class="t" style="left:671.4px;top:114.19px;font-size:11px;line-height:14px;color:#111;letter-spacing:-0.059px;-webkit-text-stroke:0.38px #111;">Смета</span>
<span class="t" style="left:631.4px;top:139.59px;font-size:11px;line-height:14px;color:#757575;letter-spacing:0.055px;">Создать</span>
<span class="t" style="left:754.4px;top:114.19px;font-size:11px;line-height:14px;color:#111;letter-spacing:0.223px;-webkit-text-stroke:0.38px #111;">Поиск</span>
<span class="t" style="left:816.0px;top:114.19px;font-size:11px;line-height:14px;color:#9e9e9e;letter-spacing:0.145px;-webkit-text-stroke:0.38px #9e9e9e;">Заменить</span>
<span class="t" style="left:791.4px;top:139.59px;font-size:11px;line-height:14px;color:#757575;letter-spacing:0.143px;">Поиск</span>
<span class="t" style="left:893.4px;top:114.19px;font-size:11px;line-height:14px;color:#111;letter-spacing:0.227px;-webkit-text-stroke:0.38px #111;">Импорт сметы</span>
<span class="t" style="left:979.4px;top:114.19px;font-size:11px;line-height:14px;color:#111;letter-spacing:0.219px;-webkit-text-stroke:0.38px #111;">Экспорт сметы</span>
<span class="t" style="left:1088.4px;top:114.19px;font-size:11px;line-height:14px;color:#111;letter-spacing:0.245px;-webkit-text-stroke:0.38px #111;">Пакетная выгрузка</span>
<span class="t" style="left:1101.4px;top:124.79px;font-size:11px;line-height:14px;color:#111;letter-spacing:0.197px;-webkit-text-stroke:0.38px #111;">документации</span>
<span class="t" style="left:1228px;top:114.19px;font-size:11px;line-height:14px;color:#111;letter-spacing:0.030px;-webkit-text-stroke:0.38px #111;">Справка о</span>
<span class="t" style="left:1225.4px;top:124.79px;font-size:11px;line-height:14px;color:#111;letter-spacing:0.168px;-webkit-text-stroke:0.38px #111;">программе</span>
<span class="t" style="left:1304.4px;top:114.19px;font-size:11px;line-height:14px;color:#9e9e9e;letter-spacing:0.129px;-webkit-text-stroke:0.38px #9e9e9e;">Горячие</span>
<span class="t" style="left:1302.6px;top:124.79px;font-size:11px;line-height:14px;color:#9e9e9e;letter-spacing:0.137px;-webkit-text-stroke:0.38px #9e9e9e;">клавиши</span>
<span class="t" style="left:1269.4px;top:139.59px;font-size:11px;line-height:14px;color:#757575;letter-spacing:0.083px;">Помощь</span>
<span class="t" style="left:1385.6px;top:114.19px;font-size:11px;line-height:14px;color:#111;letter-spacing:0.111px;-webkit-text-stroke:0.38px #111;">Сменить</span>
<span class="t" style="left:1397px;top:124.79px;font-size:11px;line-height:14px;color:#111;letter-spacing:0.033px;-webkit-text-stroke:0.38px #111;">базу</span>
<span class="t" style="left:103px;top:174.19px;font-size:11px;line-height:14px;color:#111;letter-spacing:0.181px;">Мои сметы</span>
<span class="t" style="left:121px;top:209.19px;font-size:11px;line-height:14px;color:#111;letter-spacing:0.021px;">Новая смета</span>
<span class="t" style="left:121px;top:244.79px;font-size:11px;line-height:14px;color:#111;letter-spacing:0.122px;">Подготовительные работы</span>
<span class="t" style="left:103px;top:282.19px;font-size:11px;line-height:14px;color:#111;letter-spacing:0.156px;">Корзина</span>
<span class="t" style="left:403px;top:165.55px;font-size:14px;line-height:18px;color:#212121;font-weight:700;letter-spacing:-0.688px;">Основные</span>
<span class="t" style="left:521px;top:165.55px;font-size:14px;line-height:18px;color:#424242;letter-spacing:-0.431px;">Оформление</span>
<span class="t" style="left:654.3px;top:165.55px;font-size:14px;line-height:18px;color:#424242;letter-spacing:0.059px;">Дополнительные настройки</span>
<span class="t" style="left:887px;top:165.55px;font-size:14px;line-height:18px;color:#424242;letter-spacing:0.154px;">Итоги</span>
<span class="t" style="left:413px;top:230.55px;font-size:14px;line-height:18px;color:#111;font-weight:700;letter-spacing:-0.342px;">Наименование сметы</span>
<span class="t" style="left:632.8px;top:230.55px;font-size:14px;line-height:18px;color:#212121;letter-spacing:0.168px;">Подготовительные работы</span>
<span class="t" style="left:413px;top:269.55px;font-size:14px;line-height:18px;color:#111;font-weight:700;letter-spacing:-0.363px;">Наименование объекта</span>
<span class="t" style="left:632.8px;top:269.55px;font-size:14px;line-height:18px;color:#212121;letter-spacing:0.087px;">Строительство школы по ул. Неглинная</span>
<span class="t" style="left:413px;top:308.55px;font-size:14px;line-height:18px;color:#111;font-weight:700;letter-spacing:-0.312px;">Номер/шифр сметы</span>
<span class="t" style="left:632.8px;top:308.55px;font-size:14px;line-height:18px;color:#212121;letter-spacing:-0.127px;">ЛС01-01-2026</span>
<span class="t" style="left:413px;top:378.96px;font-size:16px;line-height:21px;color:#111;font-weight:700;letter-spacing:-0.596px;">Вид работ</span>
<span class="t" style="left:447px;top:412.84px;font-size:12px;line-height:16px;color:#111;font-weight:700;letter-spacing:-0.449px;">Строительство</span>
<span class="t" style="left:447px;top:455.84px;font-size:12px;line-height:16px;color:#111;font-weight:700;letter-spacing:-0.308px;">Капитальный ремонт объектов непроизводственного назначения</span>
<span class="t" style="left:447px;top:481.84px;font-size:12px;line-height:16px;color:#333;letter-spacing:0.034px;">Применение коэф. к НР и СП для сборников ТСН-2001.4 при капитальном ремонте объектов</span>
<span class="t" style="left:447px;top:493.84px;font-size:12px;line-height:16px;color:#333;letter-spacing:0.117px;">находящихся в эксплуатации</span>
<span class="t" style="left:447px;top:530.84px;font-size:12px;line-height:16px;color:#111;font-weight:700;letter-spacing:-0.263px;">Кап.ремонт объектов производственного назначения, сетей инженерно-технического обеспечения,</span>
<span class="t" style="left:447px;top:542.84px;font-size:12px;line-height:16px;color:#111;font-weight:700;letter-spacing:-0.233px;">кап.ремонт дорог и инженерных сооружений (в т.ч. гидротехнических сооружений, мостов,</span>
<span class="t" style="left:447px;top:554.84px;font-size:12px;line-height:16px;color:#111;font-weight:700;letter-spacing:-0.398px;">путепроводов и тому подобное)</span>
<span class="t" style="left:447px;top:591.84px;font-size:12px;line-height:16px;color:#111;font-weight:700;letter-spacing:-0.190px;">Реконструкция</span>
<span class="t" style="left:447px;top:617.84px;font-size:12px;line-height:16px;color:#333;letter-spacing:0.108px;">Строительство в рамках одного титула новых зданий, сооружений, новых участков наружных</span>
<span class="t" style="left:447px;top:629.84px;font-size:12px;line-height:16px;color:#333;letter-spacing:0.089px;">инженерных сетей по новой или старой трассе</span>
<span class="t" style="left:413px;top:697.96px;font-size:16px;line-height:21px;color:#111;font-weight:700;letter-spacing:-0.448px;">Справочник поправок</span>
<span class="t" style="left:413px;top:726.15px;font-size:14px;line-height:18px;color:#111;font-weight:700;letter-spacing:-0.536px;">Сборник</span>
<span class="t" style="left:633px;top:726.15px;font-size:14px;line-height:18px;color:#212121;letter-spacing:0.061px;">Поправки для ТСН-2001 от 28.11.2025 г. доп 80</span>
<span class="t" style="left:413px;top:800.95px;font-size:14px;line-height:18px;color:#9e9e9e;font-weight:700;letter-spacing:-0.594px;">Основание</span>
<span class="t" style="left:633px;top:800.95px;font-size:14px;line-height:18px;color:#ababab;letter-spacing:0.042px;">Приказ № МКЭ-ОД/25-132 от 22.12.2025</span>
<span class="t" style="left:602px;top:841.55px;font-size:14px;line-height:18px;color:#212121;width:219px;text-align:center;">Материалы</span>
<span class="t" style="left:822px;top:841.55px;font-size:14px;line-height:18px;color:#212121;width:219px;text-align:center;">Оборудование</span>
<span class="t" style="left:414px;top:865.35px;font-size:14px;line-height:18px;color:#9e9e9e;font-weight:700;letter-spacing:-0.550px;width:181px;text-align:right;">Инфляторы</span>
<span class="t" style="left:602px;top:867.20px;font-size:13px;line-height:17px;color:#9e9e9e;width:219px;text-align:center;">9,84</span>
<span class="t" style="left:822px;top:867.20px;font-size:13px;line-height:17px;color:#9e9e9e;width:219px;text-align:center;">7,57</span>
<span class="t" style="left:414px;top:886.55px;font-size:14px;line-height:18px;color:#9e9e9e;font-weight:700;letter-spacing:-0.550px;width:181px;text-align:right;">Дефляторы</span>
<span class="t" style="left:602px;top:888.40px;font-size:13px;line-height:17px;color:#9e9e9e;width:219px;text-align:center;">9,84</span>
<span class="t" style="left:822px;top:888.40px;font-size:13px;line-height:17px;color:#9e9e9e;width:219px;text-align:center;">7,57</span>
<span class="t" style="left:414px;top:907.75px;font-size:14px;line-height:18px;color:#111;font-weight:700;letter-spacing:-0.550px;width:181px;text-align:right;">Транспортные, %</span>
<span class="t" style="left:602px;top:909.60px;font-size:13px;line-height:17px;color:#111;width:219px;text-align:center;">0,00</span>
<span class="t" style="left:822px;top:909.60px;font-size:13px;line-height:17px;color:#111;width:219px;text-align:center;">0,00</span>
<span class="t" style="left:414px;top:928.95px;font-size:14px;line-height:18px;color:#111;font-weight:700;letter-spacing:-0.550px;width:181px;text-align:right;">ЗСР, %</span>
<span class="t" style="left:602px;top:930.80px;font-size:13px;line-height:17px;color:#111;width:219px;text-align:center;">0,00</span>
<span class="t" style="left:822px;top:930.80px;font-size:13px;line-height:17px;color:#111;width:219px;text-align:center;">0,00</span>
<span class="t" style="left:1092.6px;top:230.55px;font-size:14px;line-height:18px;color:#9e9e9e;font-weight:700;letter-spacing:-0.321px;">Нормативная база</span>
<span class="t" style="left:1312.5px;top:230.55px;font-size:14px;line-height:18px;color:#9e9e9e;letter-spacing:0.117px;">Территориальные сметные нормативы для Москвы ТС...</span>
<span class="t" style="left:1092.6px;top:274.15px;font-size:14px;line-height:18px;color:#111;font-weight:700;letter-spacing:-0.534px;">Дополнение</span>
<span class="t" style="left:1312.5px;top:273.75px;font-size:14px;line-height:18px;color:#212121;letter-spacing:0.066px;">Дополнение 80 от 15.12.2025</span>
<span class="t" style="left:1116.8px;top:311.65px;font-size:14px;line-height:18px;color:#212121;letter-spacing:0.138px;">Применить зимнее удорожание</span>
<span class="t" style="left:1092.6px;top:380.96px;font-size:16px;line-height:21px;color:#111;font-weight:700;letter-spacing:-0.388px;">Коэффициенты (индексы) пересчета</span>
<span class="t" style="left:1092.6px;top:412.75px;font-size:14px;line-height:18px;color:#111;font-weight:700;letter-spacing:-0.633px;">Год</span>
<span class="t" style="left:1312.5px;top:412.75px;font-size:14px;line-height:18px;color:#212121;letter-spacing:-0.039px;">2026</span>
<span class="t" style="left:1092.6px;top:450.15px;font-size:14px;line-height:18px;color:#111;font-weight:700;letter-spacing:-0.413px;">Период выпуска</span>
<span class="t" style="left:1312.5px;top:450.15px;font-size:14px;line-height:18px;color:#212121;letter-spacing:0.197px;">I квартал (выпуск 219)</span>
<span class="t" style="left:1092.6px;top:518.96px;font-size:16px;line-height:21px;color:#111;font-weight:700;letter-spacing:0.068px;">ТСН-2001.13</span>
<span class="t" style="left:1092.6px;top:550.95px;font-size:14px;line-height:18px;color:#111;font-weight:700;letter-spacing:-0.346px;">Нормативная база</span>
<span class="t" style="left:1312.5px;top:550.95px;font-size:14px;line-height:18px;color:#212121;letter-spacing:-0.026px;">ТСН МГЭ глава 13. Доп. 45 от 03.10.2025</span>
<span class="t" style="left:1092.6px;top:588.65px;font-size:14px;line-height:18px;color:#111;font-weight:700;letter-spacing:-0.633px;">Год</span>
<span class="t" style="left:1312.5px;top:588.65px;font-size:14px;line-height:18px;color:#212121;letter-spacing:-0.039px;">2025</span>
<span class="t" style="left:1092.6px;top:625.95px;font-size:14px;line-height:18px;color:#111;font-weight:700;letter-spacing:-0.413px;">Период выпуска</span>
<span class="t" style="left:1312.5px;top:625.95px;font-size:14px;line-height:18px;color:#212121;letter-spacing:0.188px;">III квартал (выпуск 62)</span>
<span class="t" style="left:1092.6px;top:694.96px;font-size:16px;line-height:21px;color:#111;font-weight:700;letter-spacing:-0.314px;">Применение НР и СП для сборников 3.27, 3.29 и 4.10</span>
<span class="t" style="left:1126.7px;top:729.34px;font-size:12px;line-height:16px;color:#212121;letter-spacing:0.166px;">Автомобильные дороги</span>
<span class="t" style="left:1126.7px;top:754.34px;font-size:12px;line-height:16px;color:#212121;letter-spacing:0.153px;">Устройство покрытий дорожек, тротуаров, мостовых и площадок и прочее</span>
<span class="t" style="left:1092.6px;top:784.84px;font-size:12px;line-height:16px;color:#111;font-weight:700;letter-spacing:-0.391px;">Тоннели и метрополитены:</span>
<span class="t" style="left:1126.7px;top:804.34px;font-size:12px;line-height:16px;color:#212121;letter-spacing:0.136px;">Закрытый способ работ</span>
<span class="t" style="left:1126.7px;top:829.34px;font-size:12px;line-height:16px;color:#212121;letter-spacing:0.111px;">Открытый способ работ</span>
<span class="t" style="left:1092.6px;top:859.64px;font-size:12px;line-height:16px;color:#111;font-weight:700;letter-spacing:-0.454px;">Оборудование связи:</span>
<span class="t" style="left:1126.7px;top:879.34px;font-size:12px;line-height:16px;color:#212121;letter-spacing:0.159px;">Прокладка и монтаж сетей связи</span>
<span class="t" style="left:1126.7px;top:904.34px;font-size:12px;line-height:16px;color:#212121;letter-spacing:0.201px;">Прокладка и монтаж междугородных линий связи</span>
<span class="t" style="left:387.8px;top:980.35px;font-size:14px;line-height:18px;color:#111;font-weight:700;letter-spacing:-0.538px;">Всего</span>
<span class="t" style="left:446px;top:980.35px;font-size:14px;line-height:18px;color:#212121;letter-spacing:-0.096px;">Б: 18 244,99 ₽</span>
<span class="t" style="left:557.4px;top:980.35px;font-size:14px;line-height:18px;color:#212121;letter-spacing:-0.113px;">Т: 213 836,24 ₽</span>
<span class="t" style="left:1241.4px;top:989.92px;font-size:21px;line-height:27px;color:#b8b8b8;letter-spacing:0.115px;">Пересчитать смету</span>
<span class="t" style="left:1518.6px;top:989.92px;font-size:21px;line-height:27px;color:#fff;letter-spacing:0.275px;-webkit-text-stroke:0.45px #fff;">Редактировать смету</span>
<span class="t" style="left:989.4px;top:147.59px;font-size:11px;line-height:14px;color:#111;letter-spacing:-0.173px;">в формат АРПС</span>
<span class="t" style="left:989.4px;top:171.59px;font-size:11px;line-height:14px;color:#111;letter-spacing:-0.084px;">в формат XML Smeta.RU/Smeta.Cloud</span>
<span class="t" style="left:989.4px;top:195.59px;font-size:11px;line-height:14px;color:#111;letter-spacing:-0.149px;">в формат XML ТСН-2001</span>
</body></html>
